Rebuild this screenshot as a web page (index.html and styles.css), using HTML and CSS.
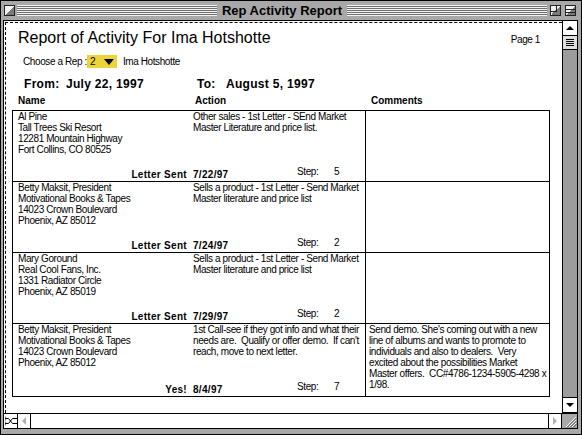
FILE: index.html
```html
<!DOCTYPE html>
<html lang="en">
<head>
    <meta charset="UTF-8">
    <meta name="viewport" content="width=device-width, initial-scale=1.0">
    <title>Rep Activity Report</title>
    <link rel="stylesheet" href="styles.css">
</head>
<body>
    <div class="window">
        <div class="titlebar">
            <span class="winbox close-box"></span>
            <div class="stripes"><span class="wintitle">Rep Activity Report</span></div>
            <span class="winbox zoom-box"></span>
            <span class="winbox collapse-box"></span>
        </div>
        <div class="frame">
            <div class="content">
                <div class="page">
                    <div class="report-head">
                        <h1>Report of Activity For Ima Hotshotte</h1>
                        <span class="page-no">Page 1</span>
                    </div>
                    <div class="rep-select">
                        <span class="rep-label">Choose a Rep :</span>
                        <span class="popup">2<span class="popup-arrow"></span></span>
                        <span class="rep-name">Ima Hotshotte</span>
                    </div>
                    <div class="range">
                        <span class="range-label">From:</span>
                        <span class="range-date">July 22, 1997</span>
                        <span class="range-label to">To:</span>
                        <span>August 5, 1997</span>
                    </div>
                    <div class="cols">
                        <span>Name</span>
                        <span>Action</span>
                        <span class="cols-notes">Comments</span>
                    </div>
                    <div id="entries" class="entries"></div>
                </div>
            </div>
            <div class="vscroll">
                <div class="scroll-btn"><span class="tri tri-up"></span></div>
                <div class="thumb"><span></span><span></span><span></span><span></span></div>
                <div class="track"></div>
                <div class="scroll-btn btn-down"><span class="tri tri-down"></span></div>
            </div>
            <div class="hscroll">
                <div class="mode-box">
                    <svg width="12" height="12" viewBox="0 0 12 12">
                        <path d="M0 3.5h3.5l4 5h4.5M0 8.5h3.5l4-5h4.5" fill="none" stroke="#000" stroke-width="1"/>
                        <path d="M0 1.5v4M0 6.5v4" stroke="#000" stroke-width="1"/>
                    </svg>
                </div>
                <div class="scroll-btn-h"><span class="tri tri-left"></span></div>
                <div class="htrack"></div>
                <div class="scroll-btn-h btn-right"><span class="tri tri-right"></span></div>
            </div>
            <div class="grow-box">
                <svg width="14" height="14" viewBox="0 0 14 14">
                    <path d="M3 13L13 3M6 13L13 6M9 13L13 9" stroke="#fff" stroke-width="1"/>
                    <path d="M4 13.5L13.5 4M7 13.5L13.5 7M10 13.5L13.5 10" stroke="#555" stroke-width="1"/>
                </svg>
            </div>
        </div>
    </div>
    <script>
        const entries = [
            {
                contact: ['Al Pine', 'Tall Trees Ski Resort', '12281 Mountain Highway', 'Fort Collins, CO 80525'],
                action: ['Other sales - 1st Letter - SEnd Market', 'Master Literature and price list.'],
                comments: [],
                status: 'Letter Sent', date: '7/22/97', step: 5
            },
            {
                contact: ['Betty Maksit, President', 'Motivational Books &amp; Tapes', '14023 Crown Boulevard', 'Phoenix, AZ 85012'],
                action: ['Sells a product - 1st Letter - Send Market', 'Master literature and price list'],
                comments: [],
                status: 'Letter Sent', date: '7/24/97', step: 2
            },
            {
                contact: ['Mary Goround', 'Real Cool Fans, Inc.', '1331 Radiator Circle', 'Phoenix, AZ 85019'],
                action: ['Sells a product - 1st Letter - Send Market', 'Master literature and price list'],
                comments: [],
                status: 'Letter Sent', date: '7/29/97', step: 2
            },
            {
                contact: ['Betty Maksit, President', 'Motivational Books &amp; Tapes', '14023 Crown Boulevard', 'Phoenix, AZ 85012'],
                action: ['1st Call-see if they got info and what their', 'needs are.  Qualify or offer demo.  If can\'t', 'reach, move to next letter.'],
                comments: ['Send demo. She\'s coming out with a new', 'line of albums and wants to promote to', 'individuals and also to dealers.  Very', 'excited about the possibilities Market', 'Master offers.  CC#4786-1234-5905-4298 x', '1/98.'],
                status: 'Yes!', date: '8/4/97', step: 7
            }
        ];

        const lines = (list) => list.map(text => `<div class="line">${text}</div>`).join('');

        const renderEntries = () => {
            const entriesDiv = document.getElementById('entries');
            entriesDiv.innerHTML = '';
            entries.forEach(entry => {
                const row = document.createElement('div');
                row.classList.add('entry');
                row.innerHTML = `
                    <div class="who">${lines(entry.contact)}</div>
                    <div class="what">${lines(entry.action)}</div>
                    <div class="notes">${lines(entry.comments)}</div>
                    <div class="status">${entry.status}</div>
                    <div class="when">
                        <span class="date">${entry.date}</span>
                        <span class="step">Step:</span>
                        <span class="step step-no">${entry.step}</span>
                    </div>
                `;
                entriesDiv.appendChild(row);
            });
        };

        renderEntries();
    </script>
</body>
</html>
```

FILE: styles.css
```css
body {
    margin: 0;
    font-family: "Liberation Sans", Arial, sans-serif;
    background-color: #a8a8a8;
}
.window {
    width: 582px;
    height: 435px;
    box-sizing: border-box;
    border: 1px solid #000;
    background-color: #a8a8a8;
    display: flex;
    flex-direction: column;
}

/* title bar */
.titlebar {
    height: 19px;
    display: flex;
    align-items: center;
    padding: 0 5px 0 3px;
}
.winbox {
    width: 11px;
    height: 11px;
    box-sizing: border-box;
    border: 1px solid #222;
    background: linear-gradient(135deg, #f2f2f2 0 50%, #7a7a7a 50%);
    position: relative;
}
.close-box {
    margin-right: 2px;
}
.zoom-box {
    margin-left: 3px;
}
.zoom-box::after {
    content: '';
    position: absolute;
    left: 0;
    top: 0;
    width: 5px;
    height: 5px;
    border-right: 1px solid #222;
    border-bottom: 1px solid #222;
}
.collapse-box {
    margin-left: 4px;
}
.collapse-box::after {
    content: '';
    position: absolute;
    left: 0;
    right: 0;
    top: 3px;
    height: 2px;
    border-top: 1px solid #222;
    border-bottom: 1px solid #222;
}
.stripes {
    flex: 1;
    height: 11px;
    background: repeating-linear-gradient(#f4f4f4 0 1px, #6e6e6e 1px 2px);
    display: flex;
    justify-content: center;
}
.wintitle {
    background-color: #a8a8a8;
    padding: 0 5px;
    font-size: 13px;
    font-weight: bold;
    line-height: 11px;
    color: #000;
}

/* window body */
.frame {
    flex: 1;
    display: grid;
    grid-template-columns: 1fr 16px;
    grid-template-rows: 1fr 16px;
    padding: 0 3px 5px 2px;
    min-height: 0;
}
.content {
    background: #fff;
    border-top: 1px solid #000;
    border-left: 1px solid #000;
    padding: 1px 0 0 1px;
    overflow: hidden;
}
.page {
    height: 100%;
    box-sizing: border-box;
    border-top: 1px dashed #000;
    border-left: 1px dashed #000;
    padding-left: 6px;
    font-size: 10px;
    letter-spacing: -0.4px;
    color: #000;
}
.report-head {
    display: flex;
    align-items: baseline;
    margin-top: 6px;
    height: 18px;
}
.report-head h1 {
    margin: 0;
    padding-left: 6px;
    font-size: 16px;
    font-weight: normal;
    line-height: 18px;
    letter-spacing: 0;
}
.page-no {
    margin-left: auto;
    margin-right: 22px;
}
.rep-select {
    display: flex;
    align-items: center;
    margin-top: 8px;
    height: 13px;
    padding-left: 11px;
    white-space: nowrap;
}
.popup {
    width: 30px;
    height: 13px;
    box-sizing: border-box;
    background-color: #eed336;
    padding-left: 3px;
    display: flex;
    align-items: center;
}
.popup-arrow {
    margin-left: auto;
    margin-right: 3px;
    width: 0;
    height: 0;
    border-left: 5px solid transparent;
    border-right: 5px solid transparent;
    border-top: 6px solid #000;
}
.rep-name {
    margin-left: 6px;
}
.range {
    display: flex;
    margin-top: 9px;
    height: 14px;
    line-height: 14px;
    padding-left: 12px;
    font-size: 12px;
    font-weight: bold;
    letter-spacing: 0.3px;
}
.range-label {
    width: 42px;
}
.range-date {
    width: 131px;
}
.range-label.to {
    width: 29px;
}
.cols {
    display: grid;
    grid-template-columns: 177px 175px 1fr;
    margin-top: 4px;
    padding-left: 1px;
    height: 12px;
    line-height: 12px;
    font-weight: bold;
    letter-spacing: 0;
}
.cols span {
    padding-left: 5px;
}
.cols .cols-notes {
    padding-left: 6px;
}

/* report rows */
.entries {
    margin-top: 3px;
    width: 538px;
    box-sizing: border-box;
    border: 1px solid #000;
}
.entry {
    display: grid;
    grid-template-columns: 177px 175px 1fr;
    grid-template-rows: 1fr auto;
    height: 71px;
    box-sizing: border-box;
    border-bottom: 1px solid #000;
    line-height: 11px;
}
.entry:last-child {
    height: 72px;
    border-bottom: none;
}
.line {
    white-space: pre;
}
.who {
    grid-column: 1;
    grid-row: 1;
    padding-left: 5px;
}
.what {
    grid-column: 2;
    grid-row: 1;
    padding-left: 3px;
}
.notes {
    grid-column: 3;
    grid-row: 1 / 3;
    border-left: 1px solid #000;
    padding-left: 3px;
}
.status {
    grid-column: 1;
    grid-row: 2;
    align-self: end;
    text-align: right;
    padding-right: 3px;
    font-weight: bold;
    line-height: 12px;
    letter-spacing: 0.3px;
}
.when {
    grid-column: 2;
    grid-row: 2;
    display: flex;
    align-items: flex-end;
    padding-left: 3px;
    line-height: 12px;
}
.date {
    width: 104px;
    font-weight: bold;
    letter-spacing: 0.3px;
}
.step {
    width: 37px;
    padding-bottom: 3px;
}
.step-no {
    width: auto;
}

/* scroll bars */
.vscroll {
    border: 1px solid #000;
    display: flex;
    flex-direction: column;
    background-color: #9c9c9c;
}
.scroll-btn {
    height: 14px;
    background: #fff;
    border-bottom: 1px solid #000;
    display: flex;
    align-items: center;
    justify-content: center;
}
.btn-down {
    border-bottom: none;
    border-top: 1px solid #000;
}
.thumb {
    height: 13px;
    background: #dedede;
    border-bottom: 1px solid #000;
    display: flex;
    flex-direction: column;
    align-items: center;
    justify-content: center;
    gap: 1px;
}
.thumb span {
    width: 8px;
    height: 1px;
    background: #000;
}
.track {
    flex: 1;
}
.tri {
    width: 0;
    height: 0;
}
.tri-up {
    border-left: 4px solid transparent;
    border-right: 4px solid transparent;
    border-bottom: 4px solid #000;
}
.tri-down {
    border-left: 4px solid transparent;
    border-right: 4px solid transparent;
    border-top: 4px solid #000;
}
.tri-left {
    border-top: 4px solid transparent;
    border-bottom: 4px solid transparent;
    border-right: 4px solid #b0b0b0;
}
.tri-right {
    border-top: 4px solid transparent;
    border-bottom: 4px solid transparent;
    border-left: 4px solid #b0b0b0;
}
.hscroll {
    border: 1px solid #000;
    background: #fff;
    display: flex;
}
.mode-box {
    width: 13px;
    border-right: 1px solid #000;
    display: flex;
    align-items: center;
    justify-content: center;
}
.scroll-btn-h {
    width: 12px;
    border-right: 1px solid #000;
    display: flex;
    align-items: center;
    justify-content: center;
}
.btn-right {
    border-right: none;
    border-left: 1px solid #000;
}
.htrack {
    flex: 1;
}
.grow-box {
    border: 1px solid #000;
    border-left: none;
    background: #a8a8a8;
    display: flex;
    align-items: center;
    justify-content: center;
}
```
